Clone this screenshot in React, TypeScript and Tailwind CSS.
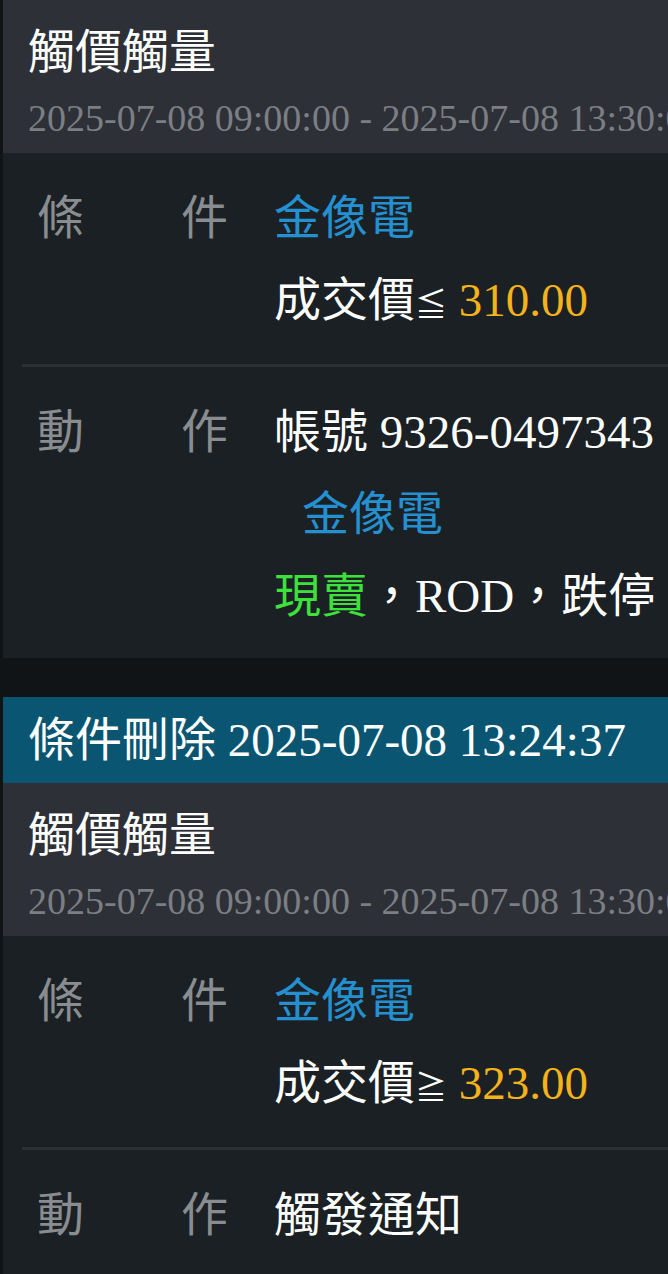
const FONT = "font-['Liberation_Serif','Noto_Sans_CJK_TC',serif]";

function Label({ a, b }: { a: string; b: string }) {
  return (
    <div className="flex w-[191px] shrink-0 justify-between text-[#8a8d90]">
      <span>{a}</span>
      <span>{b}</span>
    </div>
  );
}

function Header({ title, range }: { title: string; range: string }) {
  return (
    <div className="bg-[#2d3036] pl-[25px] pt-[22px] pb-[11px]">
      <div className="text-[47px] leading-[60px] text-white">{title}</div>
      <div className="mt-[12px] whitespace-nowrap overflow-hidden text-[38px] leading-[48px] text-[#7b7f84]">
        {range}
      </div>
    </div>
  );
}

function Card({
  op,
  price,
  action,
}: {
  op: string;
  price: string;
  action: React.ReactNode;
}) {
  return (
    <div>
      <Header
        title="觸價觸量"
        range="2025-07-08 09:00:00 - 2025-07-08 13:30:00"
      />
      <div className="bg-[#1b2024] text-[47px] leading-[82px]">
        <div className="flex pl-[34px] pt-[24px] pb-[18px]">
          <Label a="條" b="件" />
          <div className="ml-[46px]">
            <div className="text-[#2490d0]">金像電</div>
            <div className="text-white">
              成交價<span className="text-[32px]">{op}</span>{" "}
              <span className="text-[#f4b21b]">{price}</span>
            </div>
          </div>
        </div>
        <div className="ml-[19px] h-[3px] bg-[#2b3035]" />
        {action}
      </div>
    </div>
  );
}

export default function App() {
  return (
    <div className={`${FONT} min-h-[1274px] bg-[#111417] pl-[3px] overflow-hidden w-[668px]`}>
      <Card
        op="≦"
        price="310.00"
        action={
          <div className="flex pl-[34px] pt-[24px] pb-[21px]">
            <Label a="動" b="作" />
            <div className="ml-[46px] whitespace-nowrap text-white">
              <div>帳號 9326-0497343</div>
              <div className="pl-[28px] text-[#2490d0]">金像電</div>
              <div>
                <span className="text-[#3ee03c]">現賣</span>，ROD，跌停
              </div>
            </div>
          </div>
        }
      />
      <div className="h-[39px]" />
      <div className="bg-[#0a5672] pl-[25px] text-[47px] leading-[86px] text-white whitespace-nowrap">
        條件刪除 2025-07-08 13:24:37
      </div>
      <Card
        op="≧"
        price="323.00"
        action={
          <div className="flex pl-[34px] pt-[24px] pb-[21px]">
            <Label a="動" b="作" />
            <div className="ml-[46px] text-white">觸發通知</div>
          </div>
        }
      />
    </div>
  );
}
